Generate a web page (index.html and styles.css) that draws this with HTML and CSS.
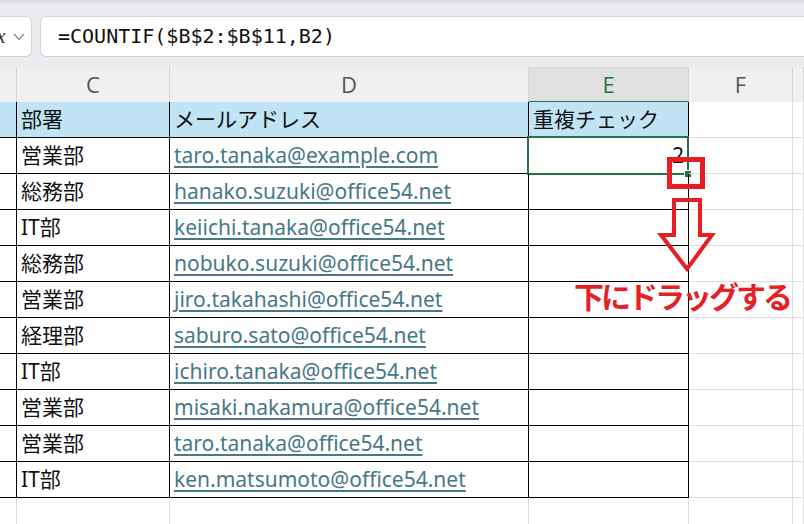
FILE: index.html
```html
<!DOCTYPE html>
<html lang="ja">
<head>
    <meta charset="UTF-8">
    <meta name="viewport" content="width=device-width, initial-scale=1.0">
    <title>COUNTIF 重複チェック</title>
    <link rel="stylesheet" href="styles.css">
</head>
<body>

<div class="topbar">
    <div class="namebox">
        <span class="fx">fx</span>
        <svg class="chevron" width="12" height="8" viewBox="0 0 12 8"><polyline points="1,1 6,6.5 11,1" fill="none" stroke="#8a8a8a" stroke-width="1.3"/></svg>
    </div>
    <div class="formula">=COUNTIF($B$2:$B$11,B2)</div>
</div>

<div class="sheet">
    <div class="colheads">
        <div class="ch"></div>
        <div class="ch">C</div>
        <div class="ch">D</div>
        <div class="ch active">E</div>
        <div class="ch">F</div>
        <div class="ch"></div>
    </div>

    <div class="row head">
        <div class="cell"></div>
        <div class="cell">部署</div>
        <div class="cell">メールアドレス</div>
        <div class="cell">重複チェック</div>
        <div class="cell empty"></div>
        <div class="cell empty"></div>
    </div>
    <div class="row">
        <div class="cell"></div>
        <div class="cell">営業部</div>
        <div class="cell"><span class="link">taro.tanaka@example.com</span></div>
        <div class="cell num">2<div class="sel"><span class="handle"></span></div></div>
        <div class="cell empty"></div>
        <div class="cell empty"></div>
    </div>
    <div class="row">
        <div class="cell"></div>
        <div class="cell">総務部</div>
        <div class="cell"><span class="link">hanako.suzuki@office54.net</span></div>
        <div class="cell"></div>
        <div class="cell empty"></div>
        <div class="cell empty"></div>
    </div>
    <div class="row">
        <div class="cell"></div>
        <div class="cell">IT部</div>
        <div class="cell"><span class="link">keiichi.tanaka@office54.net</span></div>
        <div class="cell"></div>
        <div class="cell empty"></div>
        <div class="cell empty"></div>
    </div>
    <div class="row">
        <div class="cell"></div>
        <div class="cell">総務部</div>
        <div class="cell"><span class="link">nobuko.suzuki@office54.net</span></div>
        <div class="cell"></div>
        <div class="cell empty"></div>
        <div class="cell empty"></div>
    </div>
    <div class="row">
        <div class="cell"></div>
        <div class="cell">営業部</div>
        <div class="cell"><span class="link">jiro.takahashi@office54.net</span></div>
        <div class="cell"></div>
        <div class="cell empty"></div>
        <div class="cell empty"></div>
    </div>
    <div class="row">
        <div class="cell"></div>
        <div class="cell">経理部</div>
        <div class="cell"><span class="link">saburo.sato@office54.net</span></div>
        <div class="cell"></div>
        <div class="cell empty"></div>
        <div class="cell empty"></div>
    </div>
    <div class="row">
        <div class="cell"></div>
        <div class="cell">IT部</div>
        <div class="cell"><span class="link">ichiro.tanaka@office54.net</span></div>
        <div class="cell"></div>
        <div class="cell empty"></div>
        <div class="cell empty"></div>
    </div>
    <div class="row">
        <div class="cell"></div>
        <div class="cell">営業部</div>
        <div class="cell"><span class="link">misaki.nakamura@office54.net</span></div>
        <div class="cell"></div>
        <div class="cell empty"></div>
        <div class="cell empty"></div>
    </div>
    <div class="row">
        <div class="cell"></div>
        <div class="cell">営業部</div>
        <div class="cell"><span class="link">taro.tanaka@office54.net</span></div>
        <div class="cell"></div>
        <div class="cell empty"></div>
        <div class="cell empty"></div>
    </div>
    <div class="row">
        <div class="cell"></div>
        <div class="cell">IT部</div>
        <div class="cell"><span class="link">ken.matsumoto@office54.net</span></div>
        <div class="cell"></div>
        <div class="cell empty"></div>
        <div class="cell empty"></div>
    </div>
    <div class="row">
        <div class="cell empty"></div>
        <div class="cell empty"></div>
        <div class="cell empty"></div>
        <div class="cell empty"></div>
        <div class="cell empty"></div>
        <div class="cell empty"></div>
    </div>

    <svg class="marks" width="70" height="130" viewBox="0 0 70 130">
        <rect x="14.5" y="9.5" width="33" height="27" fill="none" stroke="#e81e25" stroke-width="5"/>
        <polygon points="19,50 45,50 45,85 57,85 32,119 6,85 19,85" fill="none" stroke="#e81e25" stroke-width="4" stroke-linejoin="miter"/>
    </svg>
    <div class="note">下にドラッグする</div>
</div>

</body>
</html>
```

FILE: styles.css
```css
body {
    margin: 0;
    width: 804px;
    height: 524px;
    overflow: hidden;
    background-color: #ffffff;
    font-family: "Noto Sans", "Noto Sans CJK JP", sans-serif;
}
.topbar {
    display: flex;
    gap: 8px;
    height: 67px;
    padding-top: 16px;
    box-sizing: border-box;
    background: linear-gradient(#d6d8db 0, #e9ebee 4px, #e9ebee 100%);
}
.namebox,
.formula {
    height: 41px;
    box-sizing: border-box;
    background-color: #ffffff;
    border: 1px solid #d3d5d8;
    border-radius: 6px;
}
.namebox {
    width: 32px;
    border-left: none;
    border-radius: 0 6px 6px 0;
    display: flex;
    align-items: center;
    overflow: hidden;
}
.fx {
    font-family: "Liberation Serif", serif;
    font-style: italic;
    font-size: 20px;
    color: #333333;
    margin-left: -9px;
    margin-right: 8px;
}
.formula {
    flex: 1;
    border-right: none;
    border-radius: 6px 0 0 6px;
    padding-left: 17px;
    font-family: "DejaVu Sans Mono", monospace;
    font-size: 20px;
    line-height: 39px;
    color: #111111;
}
.sheet {
    position: relative;
}
.colheads,
.row {
    display: grid;
    grid-template-columns: 17px 153px 359px 160px 104px 1fr;
}
.colheads {
    height: 35px;
    background-color: #f0f0f0;
}
.ch {
    box-sizing: border-box;
    border-right: 1px solid #d4d4d4;
    border-bottom: 1px solid #c4c4c4;
    text-align: center;
    font-family: "Open Sans", sans-serif;
    font-size: 22px;
    line-height: 34px;
    color: #555555;
}
.ch.active {
    background-color: #e0e0e0;
    color: #217346;
    border-bottom: 2px solid #217346;
}
.row {
    height: 36px;
}
.cell {
    position: relative;
    box-sizing: border-box;
    border-right: 1px solid #000000;
    border-bottom: 1px solid #000000;
    padding: 0 4px;
    font-size: 21px;
    line-height: 34px;
    color: #111111;
    white-space: nowrap;
}
.head .cell {
    background-color: #c0e4f5;
}
.head .cell.empty {
    background-color: #ffffff;
}
.cell.empty {
    border-right-color: #dcdcdc;
    border-bottom-color: #dcdcdc;
}
.cell.num {
    text-align: right;
}
.link {
    color: #467886;
    text-decoration: underline;
    text-underline-offset: 3px;
}
.sel {
    position: absolute;
    left: -2px;
    top: -2px;
    right: -1px;
    bottom: -2px;
    border: 2px solid #217346;
}
.handle {
    position: absolute;
    right: -5px;
    bottom: -5px;
    width: 6px;
    height: 6px;
    background-color: #217346;
    border: 1px solid #ffffff;
}
.marks {
    position: absolute;
    left: 655px;
    top: 83px;
}
.note {
    position: absolute;
    left: 574px;
    top: 208px;
    font-family: "Noto Sans CJK JP", sans-serif;
    font-size: 30px;
    font-weight: 700;
    letter-spacing: -3px;
    line-height: 40px;
    color: #e81e25;
}
```
